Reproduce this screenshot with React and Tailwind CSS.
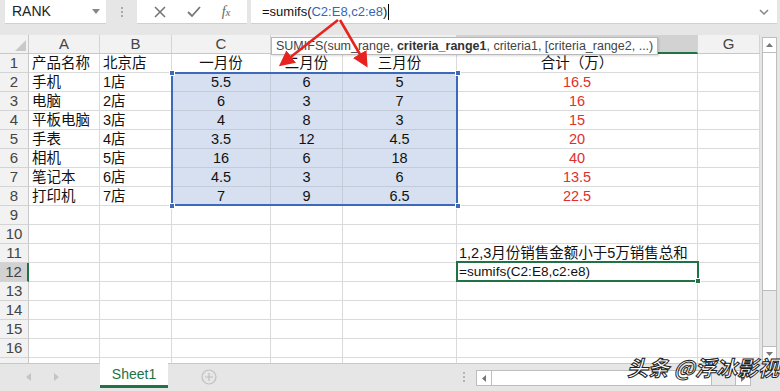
import React from "react";

const COLS = [
  { key: "A", w: "w-[71px]" },
  { key: "B", w: "w-[72px]" },
  { key: "C", w: "w-[99px]" },
  { key: "D", w: "w-[72px]" },
  { key: "E", w: "w-[114px]" },
  { key: "F", w: "w-[241px]" },
  { key: "G", w: "w-[62px]" },
];

const DATA = {
  1: ["产品名称", "北京店", "一月份", "二月份", "三月份", "合计（万）", ""],
  2: ["手机", "1店", "5.5", "6", "5", "16.5", ""],
  3: ["电脑", "2店", "6", "3", "7", "16", ""],
  4: ["平板电脑", "3店", "4", "8", "3", "15", ""],
  5: ["手表", "4店", "3.5", "12", "4.5", "20", ""],
  6: ["相机", "5店", "16", "6", "18", "40", ""],
  7: ["笔记本", "6店", "4.5", "3", "6", "13.5", ""],
  8: ["打印机", "7店", "7", "9", "6.5", "22.5", ""],
  11: ["", "", "", "", "", "1,2,3月份销售金额小于5万销售总和", ""],
  12: ["", "", "", "", "", "=sumifs(C2:E8,c2:e8)", ""],
};

const FONT = "font-['Liberation_Sans','Noto_Sans_CJK_SC',sans-serif]";

function Cell({ col, ci, r, value }) {
  const inSel = r >= 2 && r <= 8 && ci >= 2 && ci <= 4;
  let align = "justify-start pl-[3px]";
  let color = "text-[#111]";
  let size = "text-[14.5px]";
  if (ci >= 2 && ci <= 4 && r <= 8) align = "justify-center";
  if (ci === 5 && r <= 8) {
    align = "justify-center";
    if (r >= 2) color = "text-[#e0302a]";
  }
  if (ci === 5 && r >= 11) {
    align = "justify-start pl-[2px]";
  }
  if (ci === 5 && r === 12) size = "text-[13.6px]";
  return (
    <div
      className={`${col.w} shrink-0 h-full flex items-center ${align} ${color} ${size} border-r border-b ${
        inSel ? "bg-[#d6e0f0] border-[#c3cbd8]" : "bg-white border-[#dadada]"
      } whitespace-nowrap overflow-visible leading-none`}
    >
      {value}
    </div>
  );
}

export default function App() {
  const rows = Array.from({ length: 17 }, (_, i) => i + 1);
  return (
    <div className={`relative w-[780px] h-[391px] overflow-hidden bg-[#e6e6e6] ${FONT}`}>
      {/* Formula bar */}
      <div className="h-[24px] flex items-stretch">
        <div className="ml-[5px] w-[101px] bg-white flex items-center justify-between pl-[7px] pr-[6px] border-b border-[#d0d0d0]">
          <span className="text-[14px] text-[#222] font-['Liberation_Sans',sans-serif]">RANK</span>
          <svg width="8" height="5" viewBox="0 0 8 5"><path d="M0 0 L8 0 L4 5 Z" fill="#888" /></svg>
        </div>
        <div className="w-[31px] flex items-center justify-center">
          <div className="flex flex-col gap-[2px]">
            <span className="w-[2px] h-[2px] bg-[#aaa]" />
            <span className="w-[2px] h-[2px] bg-[#aaa]" />
            <span className="w-[2px] h-[2px] bg-[#aaa]" />
          </div>
        </div>
        <div className="w-[110px] bg-white flex items-center justify-around px-[6px] border-b border-[#d0d0d0]">
          <svg width="12" height="12" viewBox="0 0 12 12"><path d="M1 1 L11 11 M11 1 L1 11" stroke="#777" strokeWidth="1.6" /></svg>
          <svg width="14" height="12" viewBox="0 0 14 12"><path d="M1 6 L5 10 L13 1" stroke="#777" strokeWidth="1.8" fill="none" /></svg>
          <span className="text-[14px] italic text-[#666] font-['Liberation_Serif',serif]">f<span className="text-[11px]">x</span></span>
        </div>
        <div className="ml-[4px] w-[526px] bg-white flex items-center justify-between pl-[11px] pr-[8px] border-b border-[#d0d0d0]">
          <span className="text-[13px] text-[#111] font-['Liberation_Sans',sans-serif] flex items-center">
            =sumifs(<span className="text-[#3567b5]">C2:E8,c2:e8</span>)
            <span className="ml-[1px] w-[1px] h-[16px] bg-black" />
          </span>
          <svg width="10" height="6" viewBox="0 0 10 6"><path d="M1 1 L5 5 L9 1" stroke="#888" strokeWidth="1.5" fill="none" /></svg>
        </div>
      </div>
      <div className="h-[11px]" />

      {/* Grid area */}
      <div className="h-[328px] flex">
        <div className="relative w-[760px] h-full overflow-hidden bg-white">
          {/* header row */}
          <div className="h-[19px] flex">
            <div className="w-[29px] shrink-0 h-full bg-[#f2f2f2] border-r border-b border-[#c8c8c8] relative">
              <svg className="absolute right-[2px] bottom-[2px]" width="11" height="11" viewBox="0 0 11 11"><path d="M11 0 L11 11 L0 11 Z" fill="#c9c9c9" /></svg>
            </div>
            {COLS.map((c) => (
              <div
                key={c.key}
                className={`${c.w} shrink-0 h-full flex items-center justify-center text-[15px] ${
                  c.key === "F"
                    ? "bg-[#d2d2d2] border-b-2 border-b-[#217346] text-[#217346]"
                    : "bg-[#f2f2f2] border-b border-b-[#c8c8c8] text-[#444]"
                } border-r border-r-[#d4d4d4] font-['Liberation_Sans',sans-serif]`}
              >
                {c.key}
              </div>
            ))}
          </div>
          {rows.map((r) => (
            <div key={r} className="h-[19px] flex">
              <div
                className={`w-[29px] shrink-0 h-full flex items-center justify-center text-[15px] text-[#444] border-b border-[#d4d4d4] font-['Liberation_Sans',sans-serif] ${
                  r === 12 ? "bg-[#d2d2d2] border-r-2 border-r-[#217346]" : "bg-[#f2f2f2] border-r border-r-[#c8c8c8]"
                }`}
              >
                {r <= 16 ? r : ""}
              </div>
              {COLS.map((c, ci) => (
                <Cell key={c.key} col={c} ci={ci} r={r} value={(DATA[r] || [])[ci] || ""} />
              ))}
            </div>
          ))}

          {/* selection C2:E8 */}
          <div className="absolute left-[171px] top-[37px] w-[287px] h-[134px] border-2 border-[#3c6ab8] pointer-events-none" />
          <div className="absolute left-[169px] top-[35px] w-[6px] h-[6px] bg-[#3c6ab8] border border-white" />
          <div className="absolute left-[455px] top-[35px] w-[6px] h-[6px] bg-[#3c6ab8] border border-white" />
          <div className="absolute left-[169px] top-[168px] w-[6px] h-[6px] bg-[#3c6ab8] border border-white" />
          <div className="absolute left-[455px] top-[168px] w-[6px] h-[6px] bg-[#3c6ab8] border border-white" />

          {/* active cell F12 */}
          <div className="absolute left-[456px] top-[226px] w-[243px] h-[21px] border-2 border-[#217346] pointer-events-none" />
          <div className="absolute left-[695px] top-[243px] w-[6px] h-[6px] bg-[#217346] border border-white" />

          {/* tooltip */}
          <div className="absolute left-[271px] top-[2px] h-[18px] px-[4px] bg-white border border-[#b8b8b8] flex items-center text-[12.5px] text-[#444] whitespace-nowrap font-['Liberation_Sans',sans-serif] shadow-[1px_1px_2px_rgba(0,0,0,0.15)]">
            <span>SUMIFS(sum_range,&nbsp;</span>
            <span className="font-bold text-[#333]">criteria_range1</span>
            <span>, criteria1, [criteria_range2, ...)</span>
          </div>
        </div>

        {/* vertical scrollbar */}
        <div className="w-[20px] h-full flex">
          <div className="ml-[2px] mt-[2px] mb-[1px] w-[15px] flex flex-col bg-[#e9e9e9] border border-[#bdbdbd]">
            <div className="h-[15px] bg-white border-b border-[#bdbdbd] flex items-center justify-center">
              <svg width="7" height="4" viewBox="0 0 7 4"><path d="M0 4 L3.5 0 L7 4 Z" fill="#777" /></svg>
            </div>
            <div className="h-[238px] bg-white border-b border-[#bdbdbd]" />
            <div className="flex-1" />
            <div className="h-[15px] bg-white border-t border-[#bdbdbd] flex items-center justify-center">
              <svg width="7" height="4" viewBox="0 0 7 4"><path d="M0 0 L3.5 4 L7 0 Z" fill="#777" /></svg>
            </div>
          </div>
        </div>
      </div>

      {/* bottom bar */}
      <div className="h-[28px] flex items-start border-t border-[#c8c8c8]">
        <div className="w-[100px] h-[25px] flex items-center">
          <svg className="ml-[26px]" width="5" height="8" viewBox="0 0 5 8"><path d="M5 0 L0 4 L5 8 Z" fill="#c4c4c4" /></svg>
          <svg className="ml-[23px]" width="5" height="8" viewBox="0 0 5 8"><path d="M0 0 L5 4 L0 8 Z" fill="#c4c4c4" /></svg>
        </div>
        <div className="w-[68px] h-[25px] -mt-[1px] bg-white border-b-[3px] border-[#217346] flex items-center justify-center text-[14px] text-[#217346] font-['Liberation_Sans',sans-serif]">
          Sheet1
        </div>
        <div className="w-[82px] h-[25px] flex items-center justify-center">
          <svg width="16" height="16" viewBox="0 0 16 16">
            <circle cx="8" cy="8" r="7" fill="none" stroke="#c0c0c0" strokeWidth="1.2" />
            <path d="M8 4 V12 M4 8 H12" stroke="#c0c0c0" strokeWidth="1.2" />
          </svg>
        </div>
        <div className="w-[226px] h-[25px] flex items-center justify-end pr-[11px]">
          <div className="flex flex-col gap-[2px]">
            <span className="w-[2px] h-[2px] bg-[#b5b5b5]" />
            <span className="w-[2px] h-[2px] bg-[#b5b5b5]" />
            <span className="w-[2px] h-[2px] bg-[#b5b5b5]" />
          </div>
        </div>
        <div className="mt-[6px] w-[275px] h-[16px] flex bg-[#e9e9e9] border border-[#bdbdbd]">
          <div className="w-[15px] bg-white border-r border-[#bdbdbd] flex items-center justify-center">
            <svg width="4" height="7" viewBox="0 0 4 7"><path d="M4 0 L0 3.5 L4 7 Z" fill="#777" /></svg>
          </div>
          <div className="w-[220px] bg-white border-r border-[#bdbdbd]" />
          <div className="flex-1" />
          <div className="w-[15px] bg-white border-l border-[#bdbdbd] flex items-center justify-center">
            <svg width="4" height="7" viewBox="0 0 4 7"><path d="M0 0 L4 3.5 L0 7 Z" fill="#777" /></svg>
          </div>
        </div>
      </div>

      {/* red arrows */}
      <svg className="absolute left-0 top-0 pointer-events-none" width="780" height="391" viewBox="0 0 780 391">
        <defs>
          <marker id="ah" markerWidth="6" markerHeight="6" refX="4" refY="3" orient="auto" markerUnits="strokeWidth">
            <path d="M0 0 L6 3 L0 6 Z" fill="#e8231f" />
          </marker>
        </defs>
        <line x1="338" y1="20" x2="283" y2="63" stroke="#e8231f" strokeWidth="2.6" markerEnd="url(#ah)" />
        <line x1="340" y1="20" x2="365" y2="63" stroke="#e8231f" strokeWidth="2.6" markerEnd="url(#ah)" />
      </svg>

      {/* watermark */}
      <div className="absolute left-[627px] top-[357px] text-[21px] leading-none text-white font-['Noto_Sans_CJK_SC',sans-serif] font-bold italic [-webkit-text-stroke:1px_#222] whitespace-nowrap">
        头条 @浮冰影视
      </div>
    </div>
  );
}
